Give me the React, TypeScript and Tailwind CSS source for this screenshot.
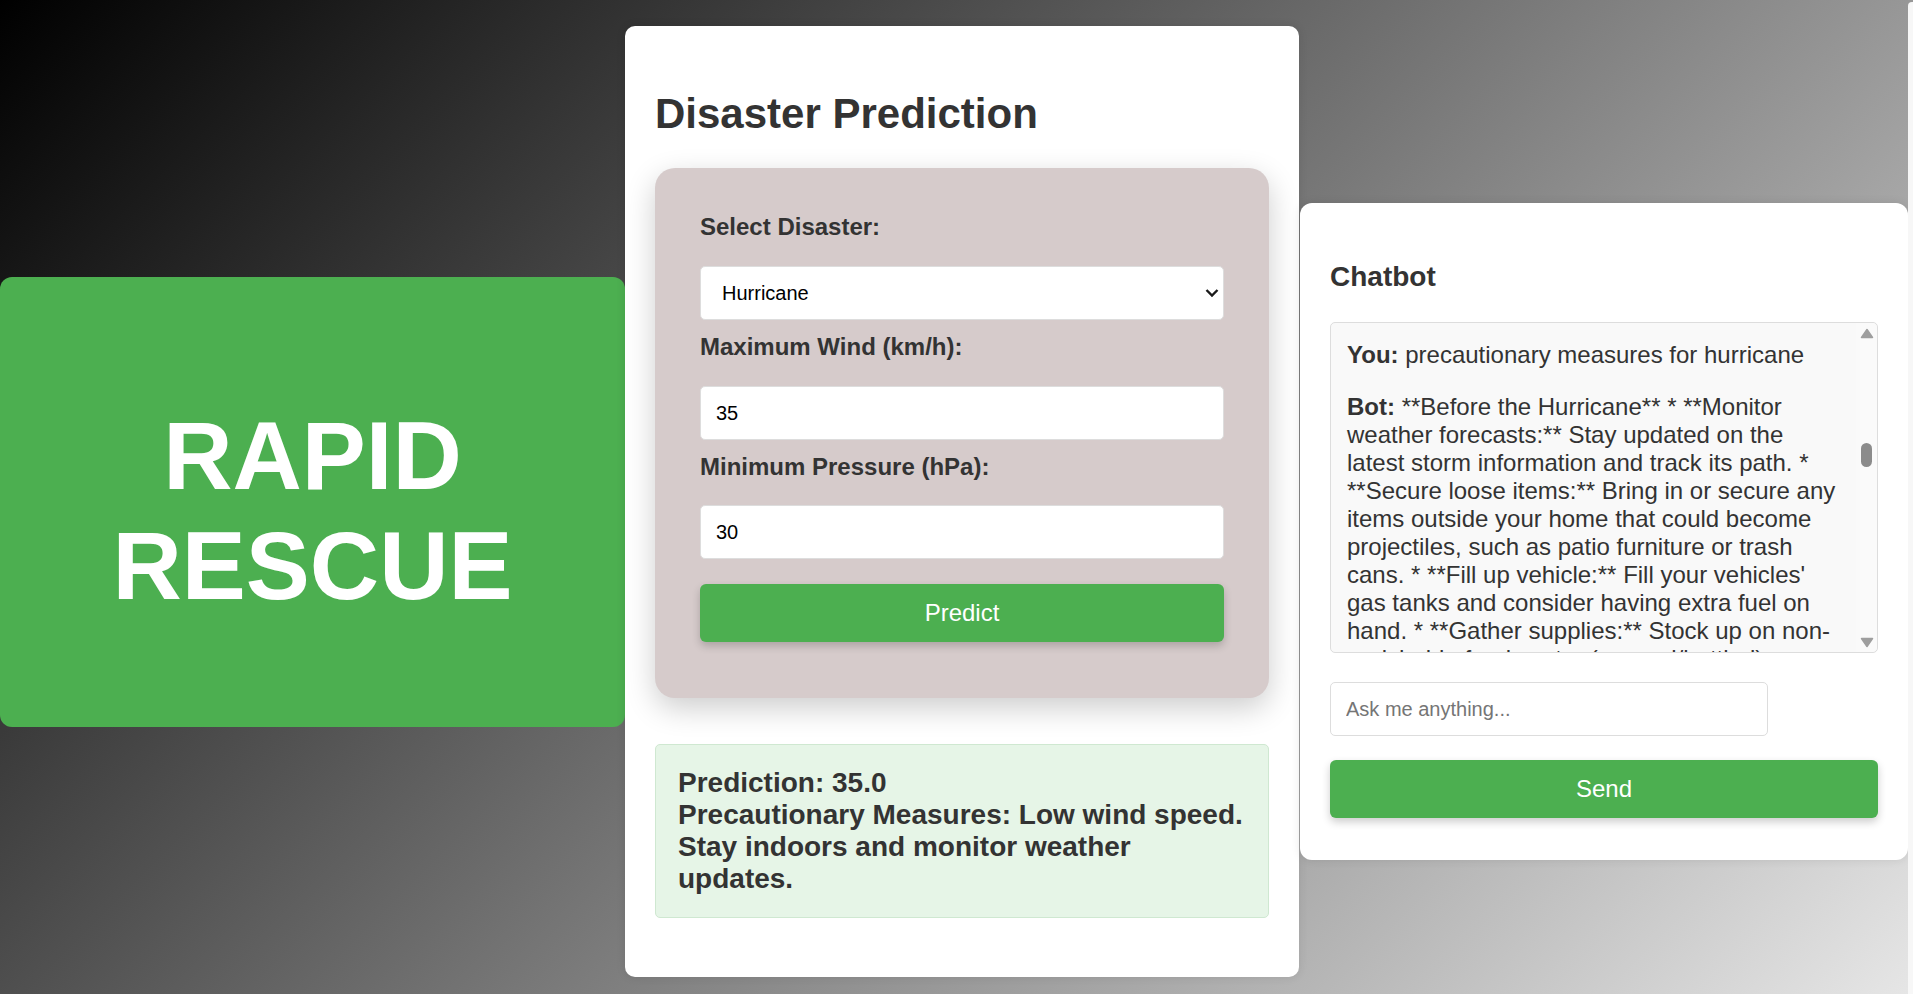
import React, { useState } from 'react';

const botReply =
  "**Before the Hurricane** * **Monitor weather forecasts:** Stay updated on the latest storm information and track its path. * **Secure loose items:** Bring in or secure any items outside your home that could become projectiles, such as patio furniture or trash cans. * **Fill up vehicle:** Fill your vehicles' gas tanks and consider having extra fuel on hand. * **Gather supplies:** Stock up on non-perishable food, water (canned/bottled), medications, first-aid supplies, flashlights, batteries, and a battery-powered radio. * **Protect your home:** Board up windows or install storm shutters, clear gutters and drains, and trim trees near your house. * **Make an evacuation plan:** Know your evacuation route and where you will go if ordered to leave. **During the Hurricane** * **Stay indoors:** Stay away from windows and doors and take shelter in an interior room on the lowest floor. * **Listen to authorities:** Follow instructions from local officials and evacuate immediately if told to do so. * **Avoid floodwaters:** Do not walk or drive through flooded areas. **After the Hurricane** * **Wait for the all-clear:** Don't return home until officials say it is safe. * **Watch for hazards:** Stay away from downed power lines and damaged buildings.";

function Brand() {
  return (
    <div className="w-[625px] h-[450px] shrink-0 bg-[#4caf50] rounded-xl flex items-center justify-center pt-[18px]">
      <h1 className="text-[96px] font-bold text-white text-center leading-[normal]">
        RAPID
        <br />
        RESCUE
      </h1>
    </div>
  );
}

function PredictionPanel() {
  const [disaster, setDisaster] = useState('Hurricane');
  const [wind, setWind] = useState('35');
  const [pressure, setPressure] = useState('30');

  const fieldClass =
    'block w-full h-[54px] px-[15px] bg-white border border-[#ddd] rounded-[5px] text-[20px] text-black outline-none';

  return (
    <div className="w-[674px] shrink-0 bg-white rounded-[10px] px-[30px] pt-[64px] pb-[59px] shadow-[0_0_10px_rgba(0,0,0,0.1)]">
      <h2 className="text-[42px] font-bold leading-[normal] text-[#333]">Disaster Prediction</h2>

      <form
        onSubmit={e => e.preventDefault()}
        className="mt-[30px] bg-[#d6cbcb] rounded-[20px] px-[45px] pt-[45px] pb-[56px] shadow-[0_10px_30px_rgba(0,0,0,0.2)]"
      >
        <label className="block text-[24px] font-bold text-[#333] mb-[25px]">Select Disaster:</label>
        <div className="relative">
          <select
            value={disaster}
            onChange={e => setDisaster(e.target.value)}
            className={`${fieldClass} appearance-none pl-[21px]`}
          >
            <option>Hurricane</option>
            <option>Earthquake</option>
            <option>Flood</option>
          </select>
          <svg
            className="absolute right-[5px] top-1/2 -translate-y-1/2 pointer-events-none"
            width="14"
            height="9"
            viewBox="0 0 14 9"
          >
            <polyline points="1.5,1.5 7,7 12.5,1.5" fill="none" stroke="#1a1a1a" strokeWidth="2.4" />
          </svg>
        </div>

        <label className="block text-[24px] font-bold text-[#333] mt-[13px] mb-[25px]">Maximum Wind (km/h):</label>
        <input type="number" value={wind} onChange={e => setWind(e.target.value)} className={fieldClass} />

        <label className="block text-[24px] font-bold text-[#333] mt-[13px] mb-[24px]">Minimum Pressure (hPa):</label>
        <input type="number" value={pressure} onChange={e => setPressure(e.target.value)} className={fieldClass} />

        <button
          type="submit"
          className="mt-[25px] w-full h-[58px] bg-[#4caf50] text-white text-[24px] rounded-[6px] shadow-[0_4px_8px_rgba(0,0,0,0.2)]"
        >
          Predict
        </button>
      </form>

      <div className="mt-[46px] bg-[#e6f5e7] border border-[#cfe8d1] rounded-[5px] pl-[22px] pr-[20px] py-[22px]">
        <p className="text-[28px] font-bold text-[#333] leading-[normal]">
          Prediction: 35.0
          <br />
          Precautionary Measures: Low wind speed. Stay indoors and monitor weather updates.
        </p>
      </div>
    </div>
  );
}

function ChatPanel() {
  const [message, setMessage] = useState('');

  return (
    <div className="w-[608px] shrink-0 ml-[1px] mt-[60px] bg-white rounded-xl px-[30px] pt-[58px] pb-[42px] shadow-[0_0_10px_rgba(0,0,0,0.1)]">
      <h3 className="text-[28px] font-bold text-[#333] leading-[normal]">Chatbot</h3>

      <div className="relative mt-[29px] h-[331px] bg-[#f9f9f9] border border-[#ddd] rounded-[5px]">
        <div className="h-full overflow-y-scroll [scrollbar-width:none] pl-[16px] pr-[39px] pt-[18px] text-[24px] text-[#333]">
          <p className="mb-[24px]">
            <strong>You:</strong> precautionary measures for hurricane
          </p>
          <p className="mb-[24px]">
            <strong>Bot:</strong> {botReply}
          </p>
        </div>
        {/* scrollbar look */}
        <div className="absolute right-0 top-0 bottom-0 w-[21px] flex flex-col items-center pt-[5px] pb-[4px] pointer-events-none bg-[#fafafa] rounded-r-[5px]">
          <svg width="14" height="11" viewBox="0 0 14 11">
            <path d="M7 1.5 L12.5 9.5 L1.5 9.5 Z" fill="#9e9e9e" stroke="#9e9e9e" strokeWidth="1.5" strokeLinejoin="round" />
          </svg>
          <div className="mt-[104px] w-[11px] h-[24px] rounded-full bg-[#8b8b8b]" />
          <div className="flex-1" />
          <svg width="14" height="11" viewBox="0 0 14 11">
            <path d="M1.5 1.5 L12.5 1.5 L7 9.5 Z" fill="#9e9e9e" stroke="#9e9e9e" strokeWidth="1.5" strokeLinejoin="round" />
          </svg>
        </div>
      </div>

      <input
        type="text"
        value={message}
        onChange={e => setMessage(e.target.value)}
        placeholder="Ask me anything..."
        className="mt-[29px] block w-[80%] h-[54px] px-[15px] border border-[#ddd] rounded-[5px] text-[20px] outline-none placeholder:text-[#757575]"
      />

      <button className="mt-[24px] w-full h-[58px] bg-[#4caf50] text-white text-[24px] rounded-[6px] shadow-[0_4px_8px_rgba(0,0,0,0.2)]">
        Send
      </button>
    </div>
  );
}

export default function App() {
  return (
    <div className="min-h-screen flex bg-[linear-gradient(135deg,#000000,#e6e6e6)] font-['Liberation_Sans',Arial,sans-serif] leading-[normal] text-[#333]">
      <div className="flex flex-1 items-center self-start pt-[26px] pb-[17px]">
        <Brand />
        <PredictionPanel />
        <ChatPanel />
      </div>
      <div className="w-[5px] mt-[2px] bg-[#f7f7f7] rounded-tl-[4px]" />
    </div>
  );
}
